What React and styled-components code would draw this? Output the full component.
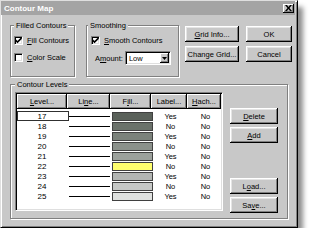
import React from 'react'
import styled, { createGlobalStyle } from 'styled-components'

const levels = [
  { level: 17, fill: '#5a615a', label: 'Yes', selected: true },
  { level: 18, fill: '#6b726b', label: 'No' },
  { level: 19, fill: '#7b827b', label: 'Yes' },
  { level: 20, fill: '#8b918b', label: 'No' },
  { level: 21, fill: '#9ca19c', label: 'Yes' },
  { level: 22, fill: '#ffff6e', label: 'No' },
  { level: 23, fill: '#b2b5b2', label: 'Yes' },
  { level: 24, fill: '#c6c8c6', label: 'No' },
  { level: 25, fill: '#dfe1df', label: 'Yes' },
]

const App = () => {
  return (
    <>
      <GlobalStyle />
      <Window>
        <TitleBar>
          <Title>Contour Map</Title>
          <CloseButton>
            <svg width="7" height="6" viewBox="0 0 7 6">
              <path d="M0 0h2l1.5 2 1.5-2h2l-2.5 3 2.5 3h-2l-1.5-2-1.5 2h-2l2.5-3z" fill="#000" />
            </svg>
          </CloseButton>
        </TitleBar>

        <Content>
          <TopRow>
            <GroupBox $w={65} $h={52}>
              <Caption>Filled Contours</Caption>
              <GroupInner $pad="10px 0 0 3px" $gap={8}>
                <CheckRow>
                  <CheckBox><CheckMark /></CheckBox>
                  <span><u>F</u>ill Contours</span>
                </CheckRow>
                <CheckRow>
                  <CheckBox />
                  <span><u>C</u>olor Scale</span>
                </CheckRow>
              </GroupInner>
            </GroupBox>

            <GroupBox $w={93} $h={52} $ml={11}>
              <Caption $left={1}>Smoothing</Caption>
              <GroupInner $pad="10px 0 0 4px" $gap={6}>
                <CheckRow>
                  <CheckBox><CheckMark /></CheckBox>
                  <span><u>S</u>mooth Contours</span>
                </CheckRow>
                <AmountRow>
                  <span>A<u>m</u>ount:</span>
                  <Select>
                    <SelectText>Low</SelectText>
                    <DropButton>
                      <svg width="5" height="3" viewBox="0 0 5 3">
                        <path d="M0 0h5l-2.5 3z" fill="#000" />
                      </svg>
                    </DropButton>
                  </Select>
                </AmountRow>
              </GroupInner>
            </GroupBox>

            <ButtonGrid>
              <Button><u>G</u>rid Info...</Button>
              <Button>OK</Button>
              <Button>Change Grid...</Button>
              <Button>Cancel</Button>
            </ButtonGrid>
          </TopRow>

          <GroupBox $w={278} $h={135} $mt={7}>
            <Caption $left={4}>Contour Levels</Caption>
            <LevelsInner>
              <Table>
                <HeaderRow>
                  <HeaderCell $w={50}><u>L</u>evel...</HeaderCell>
                  <HeaderCell $w={43}>Li<u>n</u>e...</HeaderCell>
                  <HeaderCell $w={41}>F<u>i</u>ll...</HeaderCell>
                  <HeaderCell $w={36}>Label...</HeaderCell>
                  <HeaderCell $w={34}><u>H</u>ach...</HeaderCell>
                </HeaderRow>
                <Rows>
                  {levels.map((r) => (
                    <Row key={r.level}>
                      <LevelCell $selected={r.selected}>{r.level}</LevelCell>
                      <LineCell><LineStroke /></LineCell>
                      <FillCell><Swatch $color={r.fill} /></FillCell>
                      <TextCell $w={36}>{r.label}</TextCell>
                      <TextCell $w={34}>No</TextCell>
                    </Row>
                  ))}
                </Rows>
              </Table>

              <SideButtons>
                <SideButton><u>D</u>elete</SideButton>
                <SideButton><u>A</u>dd</SideButton>
                <SideButton $spaced>L<u>o</u>ad...</SideButton>
                <SideButton>Sa<u>v</u>e...</SideButton>
              </SideButtons>
            </LevelsInner>
          </GroupBox>
        </Content>
      </Window>
    </>
  )
}

const CheckMark = () => (
  <svg width="7" height="7" viewBox="0 0 7 7">
    <path d="M0.5 3 L2.5 5 L6.5 1" stroke="#000" strokeWidth="1.6" fill="none" />
  </svg>
)

export default App

const GlobalStyle = createGlobalStyle`
  html, body {
    margin: 0;
    padding: 0;
    background: #fff;
  }
  body {
    font-family: "Liberation Sans", Arial, sans-serif;
    font-size: 7.5px;
    color: #000;
  }
  u {
    text-decoration-thickness: 1px;
    text-underline-offset: 1px;
  }
`;

const Window = styled.div`
box-sizing: border-box;
width: 298px;
height: 228px;
background: #c8c8c8;
border: 1px solid;
border-color: #dfdfdf #000 #000 #dfdfdf;
box-shadow: inset 1px 1px 0 #fff, inset -1px -1px 0 #808080, 5px 7px 5px rgba(0, 0, 0, 0.45);
padding: 0 2px 2px 2px;
`;

const TitleBar = styled.div`
height: 14px;
display: flex;
align-items: center;
justify-content: space-between;
background: #a4a4a4;
padding: 0 1px 0 3px;
margin-left: -2px;
`;

const Title = styled.span`
color: #fff;
font-weight: bold;
font-size: 8px;
`;

const CloseButton = styled.div`
box-sizing: border-box;
width: 11px;
height: 9px;
display: flex;
align-items: center;
justify-content: center;
background: #c8c8c8;
box-shadow: inset -1px -1px 0 #000, inset 1px 1px 0 #fff, inset -2px -2px 0 #808080;
`;

const Content = styled.div`
padding: 10px 0 0 7px;
`;

const TopRow = styled.div`
display: flex;
align-items: flex-start;
`;

const GroupBox = styled.div`
position: relative;
box-sizing: border-box;
width: ${(p) => p.$w}px;
height: ${(p) => p.$h}px;
margin-left: ${(p) => p.$ml || 0}px;
margin-top: ${(p) => p.$mt || 0}px;
border: 1px solid #808080;
box-shadow: 1px 1px 0 #fff, inset 1px 1px 0 #fff;
`;

const Caption = styled.span`
position: absolute;
top: -5px;
left: ${(p) => (p.$left !== undefined ? p.$left : 3)}px;
padding: 0 2px;
line-height: 9px;
background: #c8c8c8;
white-space: nowrap;
`;

const GroupInner = styled.div`
display: flex;
flex-direction: column;
gap: ${(p) => p.$gap}px;
padding: ${(p) => p.$pad};
`;

const CheckRow = styled.div`
display: flex;
align-items: center;
gap: 4px;
height: 9px;
white-space: nowrap;
`;

const CheckBox = styled.div`
box-sizing: border-box;
width: 9px;
height: 9px;
flex: none;
display: flex;
align-items: center;
justify-content: center;
background: #fff;
border: 1px solid;
border-color: #808080 #fff #fff #808080;
box-shadow: inset 1px 1px 0 #000, inset -1px -1px 0 #dfdfdf;
`;

const AmountRow = styled.div`
display: flex;
align-items: center;
gap: 2px;
height: 14px;
padding-left: 4px;
`;

const Select = styled.div`
box-sizing: border-box;
width: 46px;
height: 14px;
display: flex;
align-items: center;
justify-content: space-between;
background: #fff;
border: 1px solid;
border-color: #808080 #fff #fff #808080;
box-shadow: inset 1px 1px 0 #000, inset -1px -1px 0 #dfdfdf;
padding: 1px;
`;

const SelectText = styled.span`
padding-left: 2px;
`;

const DropButton = styled.div`
box-sizing: border-box;
width: 9px;
height: 10px;
display: flex;
align-items: center;
justify-content: center;
background: #c8c8c8;
box-shadow: inset -1px -1px 0 #000, inset 1px 1px 0 #fff, inset -2px -2px 0 #808080;
`;

const ButtonGrid = styled.div`
display: grid;
grid-template-columns: 54px 46px;
grid-auto-rows: 16px;
column-gap: 7px;
row-gap: 4px;
margin: 1px 0 0 6px;
`;

const Button = styled.div`
box-sizing: border-box;
display: flex;
align-items: center;
justify-content: center;
background: #c8c8c8;
box-shadow: inset -1px -1px 0 #000, inset 1px 1px 0 #fff, inset -2px -2px 0 #808080, inset 2px 2px 0 #e4e4e4;
white-space: nowrap;
`;

const LevelsInner = styled.div`
display: flex;
align-items: flex-start;
padding: 7px 0 0 4px;
`;

const Table = styled.div`
box-sizing: border-box;
width: 208px;
height: 119px;
background: #fff;
border: 1px solid;
border-color: #808080 #fff #fff #808080;
box-shadow: inset 1px 1px 0 #000, inset -1px -1px 0 #dfdfdf;
padding: 1px;
`;

const HeaderRow = styled.div`
display: flex;
height: 15px;
`;

const HeaderCell = styled.div`
box-sizing: border-box;
width: ${(p) => p.$w}px;
flex: none;
display: flex;
align-items: center;
justify-content: center;
background: #c8c8c8;
box-shadow: inset -1px -1px 0 #000, inset 1px 1px 0 #fff, inset -2px -2px 0 #808080;
white-space: nowrap;
`;

const Rows = styled.div`
padding-top: 2px;
`;

const Row = styled.div`
display: flex;
height: 10px;
align-items: center;
`;

const LevelCell = styled.div`
box-sizing: border-box;
width: 52px;
margin-right: -2px;
height: 10px;
display: flex;
align-items: center;
justify-content: center;
padding-right: 2px;
border: 1px solid ${(p) => (p.$selected ? '#303030' : 'transparent')};
position: relative;
z-index: 1;
font-size: 8px;
`;

const LineCell = styled.div`
width: 43px;
height: 10px;
display: flex;
align-items: center;
padding-left: 2px;
box-sizing: border-box;
`;

const LineStroke = styled.div`
width: 41px;
height: 1px;
background: #000;
`;

const FillCell = styled.div`
width: 41px;
height: 10px;
padding-left: 2px;
box-sizing: border-box;
display: flex;
align-items: center;
`;

const Swatch = styled.div`
box-sizing: border-box;
width: 41px;
height: 9px;
flex: none;
background: ${(p) => p.$color};
border: 1px solid #404040;
`;

const TextCell = styled.div`
width: ${(p) => p.$w}px;
flex: none;
text-align: center;
padding-left: 3px;
box-sizing: border-box;
`;

const SideButtons = styled.div`
display: flex;
flex-direction: column;
gap: 3px;
padding-top: 16px;
margin-left: 7px;
`;

const SideButton = styled(Button)`
width: 48px;
height: 16px;
margin-top: ${(p) => (p.$spaced ? 32 : 0)}px;
`;
